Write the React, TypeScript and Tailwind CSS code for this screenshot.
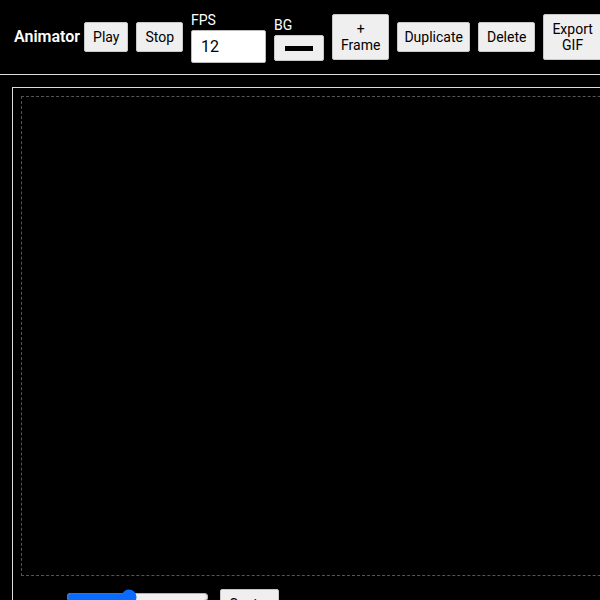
import React from "react";

const Btn = ({ children, px = "px-2" }: { children: React.ReactNode; px?: string }) => (
  <button className={`shrink-0 bg-[#efefef] text-black text-[14px] leading-[16px] py-[6px] border border-[#c8c8c8] rounded-[2px] ${px}`}>
    {children}
  </button>
);

const App = () => {
  return (
    <div className="h-screen overflow-hidden bg-black text-white font-['Roboto','Liberation_Sans',sans-serif]">
      <div className="flex items-center gap-2 h-[75px] px-[14px] border-b border-[#dcdcdc] whitespace-nowrap">
        <h1 className="shrink-0 text-[16px] font-semibold mr-[-4px]">Animator</h1>
        <Btn>Play</Btn>
        <Btn>Stop</Btn>
        <div className="shrink-0 flex flex-col gap-[1px]">
          <span className="text-[14px] leading-[17px]">FPS</span>
          <input
            defaultValue="12"
            className="w-[75px] h-[33px] bg-white text-black text-[16px] px-[9px] border border-[#bbb] rounded-[2px] outline-none"
          />
        </div>
        <div className="shrink-0 flex flex-col gap-[1px] pt-[4px]">
          <span className="text-[14px] leading-[17px]">BG</span>
          <div className="w-[50px] h-[26px] bg-[#efefef] border border-[#c8c8c8] rounded-[2px] flex items-center justify-center">
            <div className="w-[28px] h-[5px] bg-black" />
          </div>
        </div>
        <Btn>
          <span className="block">+</span>
          <span className="block">Frame</span>
        </Btn>
        <Btn px="px-[6px]">Duplicate</Btn>
        <Btn>Delete</Btn>
        <Btn>
          <span className="block">Export</span>
          <span className="block">GIF</span>
        </Btn>
      </div>

      <div className="ml-3 mt-3 w-[720px] border-l border-t border-[#dcdcdc] p-2">
        <div className="w-[680px] h-[480px] border border-dashed border-[#555]" />
        <div className="flex items-start mt-[13px]">
          <input
            type="range"
            defaultValue={43}
            className="ml-[45px] mt-0 w-[143px] accent-[#0a6cff]"
          />
          <button className="ml-[11px] bg-[#efefef] text-black text-[14px] leading-[16px] px-2 py-[6px] border border-[#c8c8c8] rounded-[2px]">
            Center
          </button>
        </div>
      </div>
    </div>
  );
};

export default App;
